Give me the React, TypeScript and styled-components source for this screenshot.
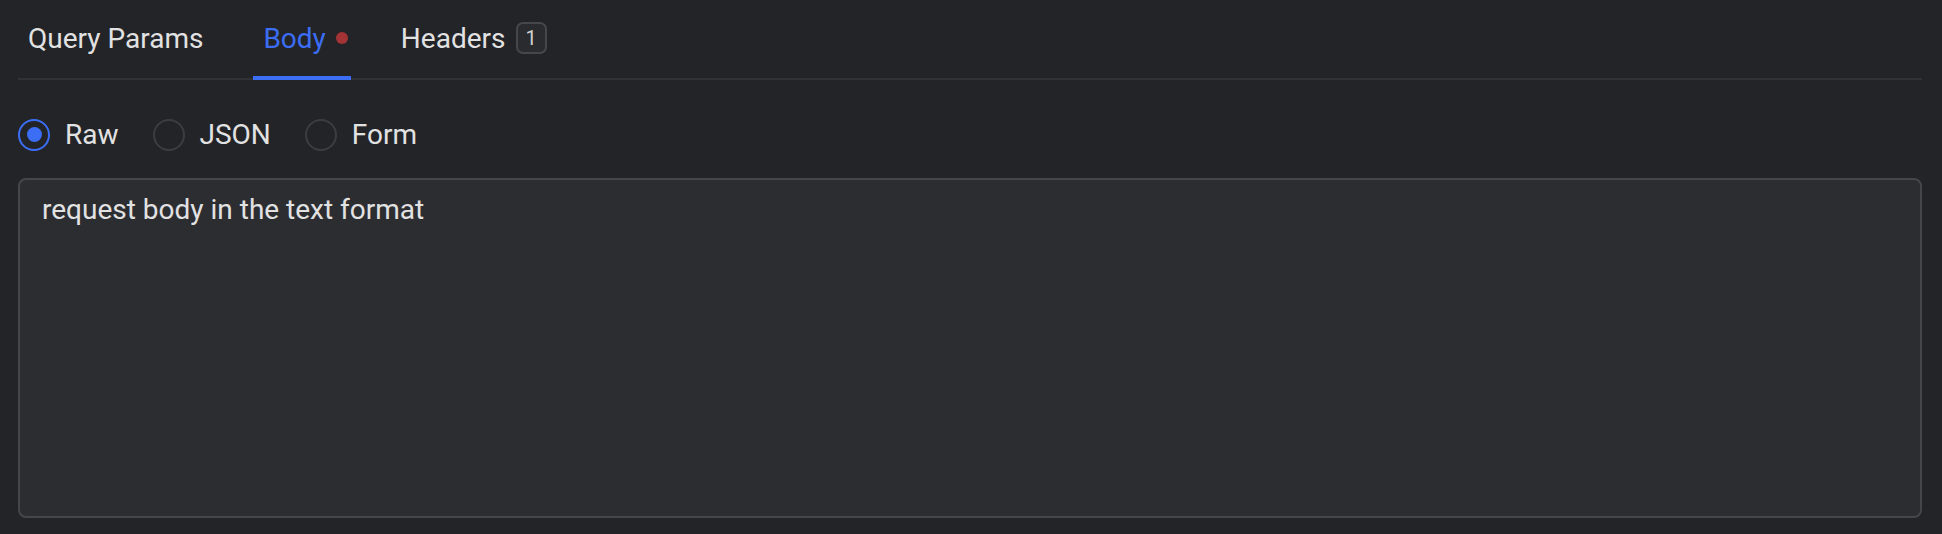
import styled, { createGlobalStyle } from 'styled-components'
import { useState } from 'react'

const GlobalStyle = createGlobalStyle`
  html, body {
    margin: 0;
    padding: 0;
    background: #232428;
  }
  body {
    font-family: Roboto, "Noto Sans", sans-serif;
    color: #e2e2e2;
  }
`;

const Panel = styled.div`
  display: flex;
  flex-direction: column;
  padding: 0 20px 16px 18px;
  height: 534px;
  box-sizing: border-box;
`;

const TabBar = styled.div`
  display: flex;
  align-items: stretch;
  height: 78px;
  border-bottom: 2px solid #313236;
`;

const TabList = styled.div`
  display: flex;
  gap: 40px;
`;

const Tab = styled.button<{ $active?: boolean }>`
  display: flex;
  align-items: center;
  gap: 10px;
  padding: 0 10px;
  margin-bottom: -2px;
  background: none;
  border: none;
  border-bottom: 4px solid ${p => (p.$active ? '#3b6ef5' : 'transparent')};
  font-family: Roboto, sans-serif;
  font-size: 28px;
  color: ${p => (p.$active ? '#3b6ef5' : '#e2e2e2')};
  cursor: pointer;
`;

const Dot = styled.span`
  width: 12px;
  height: 12px;
  margin-right: -7px;
  border-radius: 50%;
  background: #a33334;
`;

const Badge = styled.span`
  display: flex;
  align-items: center;
  justify-content: center;
  width: 31px;
  height: 32px;
  box-sizing: border-box;
  border: 2px solid #46474c;
  border-radius: 7px;
  background: #2a2b2f;
  font-size: 20px;
  color: #d0d0d0;
`;

const RadioRow = styled.div`
  display: flex;
  align-items: center;
  gap: 34px;
  margin: 38px 0 27px;
`;

const RadioOption = styled.label`
  display: flex;
  align-items: center;
  gap: 15px;
  font-size: 28px;
  line-height: 32px;
  padding-top: 1px;
  color: #e2e2e2;
  cursor: pointer;
`;

const RadioCircle = styled.span<{ $checked?: boolean }>`
  display: flex;
  align-items: center;
  justify-content: center;
  width: 32px;
  height: 32px;
  margin-top: -1px;
  box-sizing: border-box;
  border-radius: 50%;
  border: ${p => (p.$checked ? '2.5px solid #3b6ef5' : '2px solid #3c3d42')};

  &::after {
    content: '';
    display: ${p => (p.$checked ? 'block' : 'none')};
    width: 15px;
    height: 15px;
    border-radius: 50%;
    background: #3b6ef5;
  }
`;

const BodyInput = styled.textarea`
  flex: 1;
  resize: none;
  box-sizing: border-box;
  padding: 13px 22px;
  background: #2c2d31;
  border: 2px solid #45464b;
  border-radius: 8px;
  font-family: Roboto, sans-serif;
  font-size: 28px;
  color: #e2e2e2;
  outline: none;

  &::placeholder {
    color: #e2e2e2;
    opacity: 1;
  }
`;

const tabs = ['Query Params', 'Body', 'Headers'];
const modes = ['Raw', 'JSON', 'Form'];

export default function App() {
  const [tab, setTab] = useState('Body');
  const [mode, setMode] = useState('Raw');

  return (
    <>
      <GlobalStyle />
      <Panel>
        <TabBar>
          <TabList>
            {tabs.map(t => (
              <Tab key={t} $active={t === tab} onClick={() => setTab(t)}>
                {t}
                {t === 'Body' && <Dot />}
                {t === 'Headers' && <Badge>1</Badge>}
              </Tab>
            ))}
          </TabList>
        </TabBar>
        <RadioRow>
          {modes.map(m => (
            <RadioOption key={m} onClick={() => setMode(m)}>
              <RadioCircle $checked={m === mode} />
              {m}
            </RadioOption>
          ))}
        </RadioRow>
        <BodyInput placeholder="request body in the text format" />
      </Panel>
    </>
  );
}
